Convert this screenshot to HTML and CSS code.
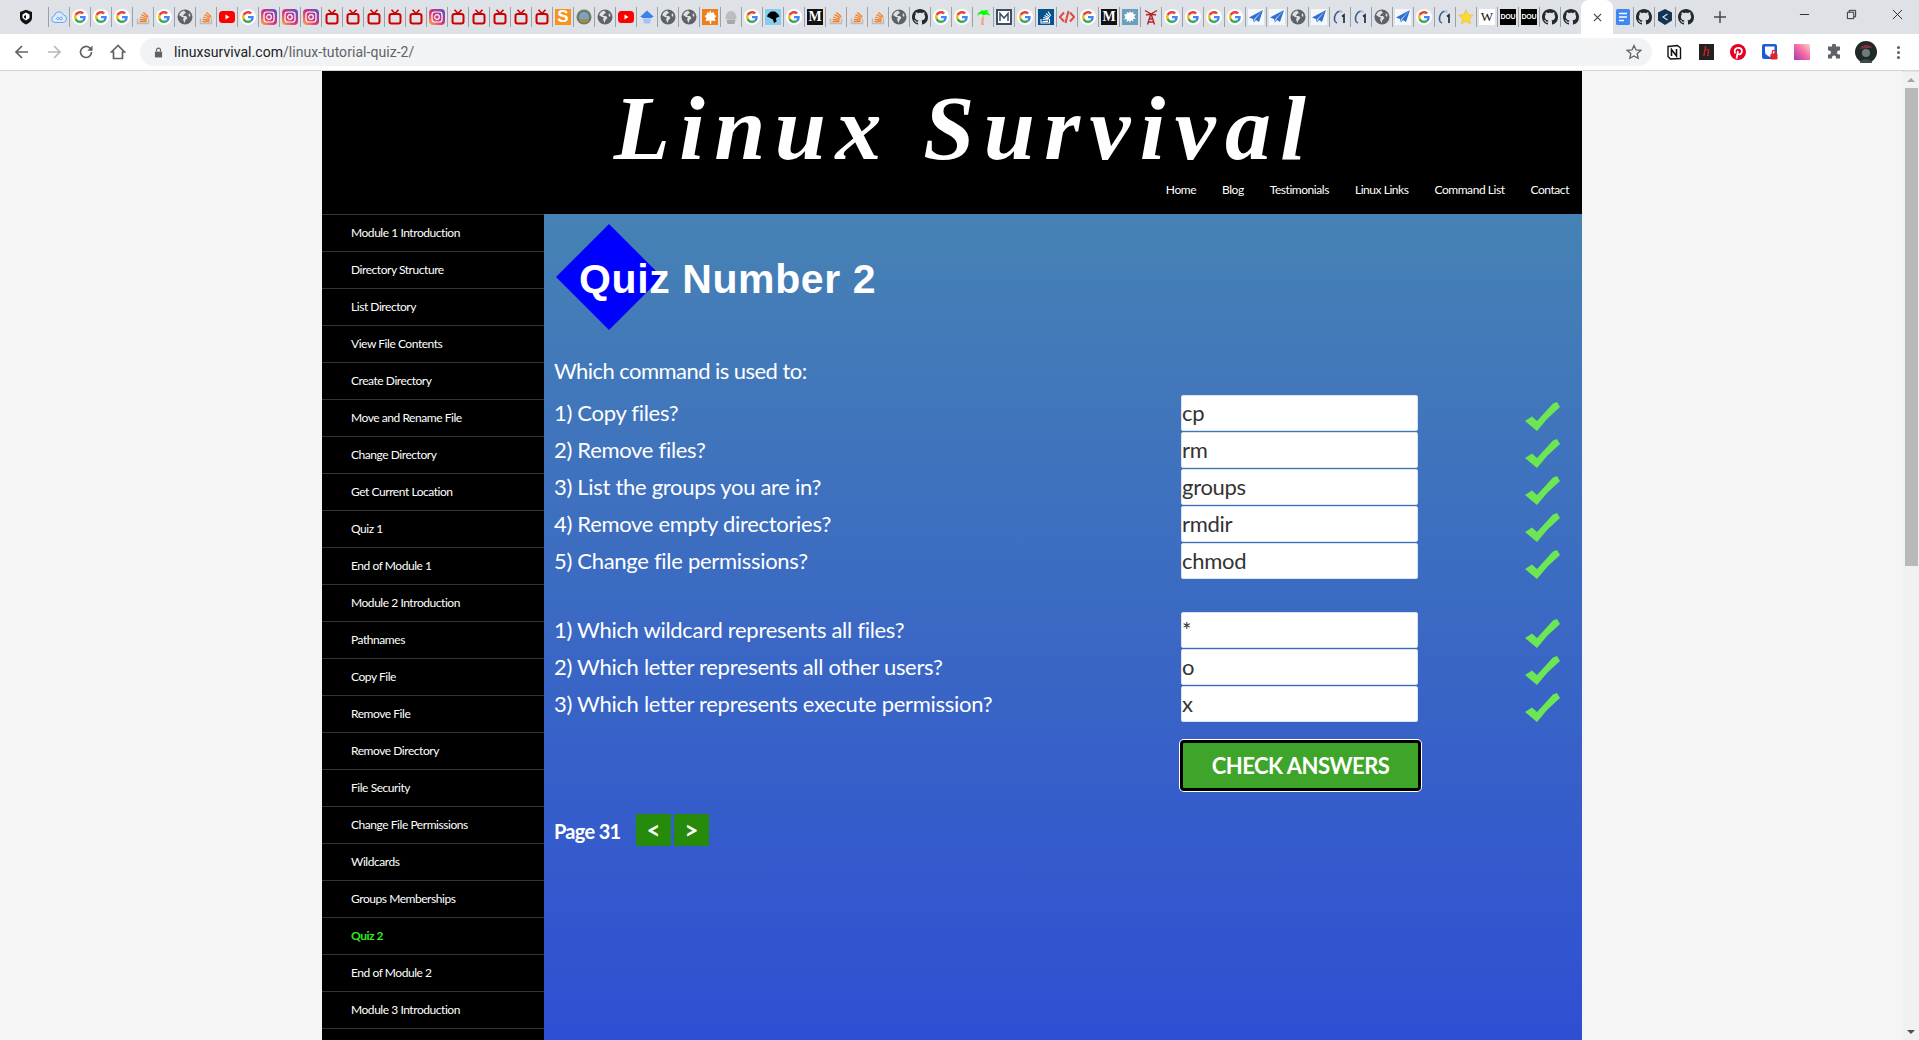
FILE: index.html
```html
<!DOCTYPE html>
<html lang="en">
<head>
<meta charset="utf-8">
<title>Linux Survival</title>
<link rel="stylesheet" href="styles.css">
</head>
<body>
<svg class="defs" width="0" height="0" aria-hidden="true">
<symbol id="g" viewBox="-8 -8 64 64"><circle cx="24" cy="24" r="32" fill="#fff"/><path fill="#EA4335" d="M24 9.5c3.54 0 6.71 1.22 9.21 3.6l6.85-6.85C35.9 2.38 30.47 0 24 0 14.62 0 6.51 5.38 2.56 13.22l7.98 6.19C12.43 13.72 17.74 9.5 24 9.5z"/><path fill="#4285F4" d="M46.98 24.55c0-1.57-.15-3.09-.38-4.55H24v9.02h12.94c-.58 2.96-2.26 5.48-4.78 7.18l7.73 6c4.51-4.18 7.09-10.36 7.09-17.65z"/><path fill="#FBBC05" d="M10.53 28.59c-.48-1.45-.76-2.99-.76-4.59s.27-3.14.76-4.59l-7.98-6.19C.92 16.46 0 20.12 0 24c0 3.88.92 7.54 2.56 10.78l7.97-6.19z"/><path fill="#34A853" d="M24 48c6.48 0 11.93-2.13 16.01-5.81l-7.73-6c-2.15 1.45-4.92 2.3-8.28 2.3-6.26 0-11.57-4.22-13.47-9.91l-7.98 6.19C6.51 42.62 14.62 48 24 48z"/></symbol>
<symbol id="gh" viewBox="0 0 16 16"><path fill="#24292e" d="M8 0C3.58 0 0 3.58 0 8c0 3.54 2.29 6.53 5.47 7.59.4.07.55-.17.55-.38 0-.19-.01-.82-.01-1.49-2.01.37-2.53-.49-2.69-.94-.09-.23-.48-.94-.82-1.13-.28-.15-.68-.52-.01-.53.63-.01 1.08.58 1.23.82.72 1.21 1.87.87 2.33.66.07-.52.28-.87.51-1.07-1.78-.2-3.64-.89-3.64-3.95 0-.87.31-1.59.82-2.15-.08-.2-.36-1.02.08-2.12 0 0 .67-.21 2.2.82.64-.18 1.32-.27 2-.27.68 0 1.36.09 2 .27 1.53-1.04 2.2-.82 2.2-.82.44 1.1.16 1.92.08 2.12.51.56.82 1.27.82 2.15 0 3.07-1.87 3.75-3.65 3.95.29.25.54.73.54 1.48 0 1.07-.01 1.93-.01 2.2 0 .21.15.46.55.38A8.013 8.013 0 0016 8c0-4.42-3.58-8-8-8z"/></symbol>
<symbol id="so" viewBox="0 0 16 16"><path fill="none" stroke="#bcbbbb" stroke-width="1.4" d="M2.5 9.5v5h11v-5"/><path fill="none" stroke="#f48024" stroke-width="1.3" d="M4.500 12.500h7M4.700 10.300l6.800.9M5.300 8l6.500 2M6.500 5.600l6 3.200M8.300 3.400l5 4.300"/></symbol>
<symbol id="globe" viewBox="0 0 16 16"><circle cx="8" cy="8" r="7.5" fill="#5f6368"/><path fill="#dee1e6" d="M7 1.500 4 3 2 6l3 2 2 .5-1 2 1.500 3.500 1-3 2-2-1.500-2H6l1-2 2-1zM12 4l1.500 2-.5 2-1.500-1.500z"/></symbol>
<symbol id="yt" viewBox="0 0 16 16"><rect y="2" width="16" height="12" rx="3.500" fill="#f00"/><path fill="#fff" d="m6.500 5.500 4 2.500-4 2.500z"/></symbol>
<symbol id="ig" viewBox="0 0 16 16"><defs><linearGradient id="igg" x1="0" y1="1" x2="1" y2="0"><stop offset="0" stop-color="#fdb04a"/><stop offset=".45" stop-color="#d6337a"/><stop offset="1" stop-color="#5a50c8"/></linearGradient></defs><rect width="16" height="16" rx="4" fill="url(#igg)"/><rect x="3" y="3" width="10" height="10" rx="2.500" fill="none" stroke="#fff" stroke-width="1.200"/><circle cx="8" cy="8" r="2.300" fill="none" stroke="#fff" stroke-width="1.200"/></symbol>
<symbol id="tv" viewBox="0 0 16 16"><path fill="none" stroke="#c00" stroke-width="1.600" d="m4.500.8 3.500 3.700L11.500.8"/><rect x="2.500" y="5" width="11" height="9.500" rx="2" fill="none" stroke="#c00" stroke-width="2"/></symbol>
<symbol id="cloud" viewBox="0 0 16 16"><path fill="#dbeafe" stroke="#6aa5e8" stroke-width="1" d="M4 13.500a3.500 3.500 0 0 1-.6-6.900A4.700 4.700 0 0 1 12.500 6a3.800 3.800 0 0 1-.3 7.500z"/><path fill="none" stroke="#6aa5e8" d="M5.500 9.800a1.400 1.400 0 0 1 2.500-.8l1 1.500a1.400 1.400 0 1 0 0-2l-1 1.500a1.400 1.400 0 0 1-2.500-.2z"/></symbol>
<symbol id="photo" viewBox="0 0 16 16"><circle cx="8" cy="8" r="7.500" fill="#6d7a66"/><circle cx="8" cy="8" r="5" fill="#7ba3c0"/><path fill="#a58a4a" d="M3 10h10l-2 3.500H5z"/></symbol>
<symbol id="house" viewBox="0 0 16 16"><path fill="#3b82e8" d="M8 1.500 15 8h-2v1H3V8H1z"/><path fill="#9cc4f5" d="M4 9.500h8l-1 5H5z"/></symbol>
<symbol id="leaf" viewBox="0 0 16 16"><rect width="16" height="16" fill="#ef7f1a"/><path fill="#fff" d="m8 1 1.500 3 2-1 1 3 2 1-2 2 1 3-4-.5-.5 3.500h-1l-.5-3.500-4 .5 1-3-2-2 2-1 1-3 2 1z"/></symbol>
<symbol id="cup" viewBox="0 0 16 16"><path fill="#bdbdbd" d="M3 7a5 5 0 0 1 10 0 2 2 0 0 1 0 3H3a2 2 0 0 1 0-3z"/><path fill="#a8a8a8" d="M3.500 10.500h9l-1 4.500h-7z"/></symbol>
<symbol id="dog" viewBox="0 0 16 16"><rect width="16" height="16" fill="#87cdee"/><path fill="#000" d="M3 5 6 2.500h4L13 5l1.500 2.500L11 9l.5 3.500L9 14l-1-3.500L5 9 2 7.500z"/></symbol>
<symbol id="palm" viewBox="0 0 16 16"><path fill="#f2a68a" d="M6 16c0-4 .5-7 2-9l1.500.5C8.500 10 8.500 13 9 16z"/><path fill="#0f0" d="M8.500 6.500C6 4 3.500 5 2 7.500 3 5 3 3 6 2.500 5.500 1.500 7 .5 9 2c1.500-1.500 3.500-1 5 .5-1.500-.3-2.500 0-3 .5 2 .2 3.500 1.500 4 4-1.500-1.500-3.500-2.500-6.500-.5z"/></symbol>
<symbol id="mbox" viewBox="0 0 16 16"><rect x="1" y="1" width="14" height="14" fill="#fff" stroke="#3d4f66" stroke-width="2"/><path fill="none" stroke="#3d4f66" stroke-width="1.500" d="M4 12V4.500L8 9l4-4.500V12"/></symbol>
<symbol id="soblue" viewBox="0 0 16 16"><rect width="16" height="16" fill="#06528f"/><path fill="none" stroke="#fff" stroke-width="1.100" d="M3 10v4h8.500v-4M4.500 12.500h5.500M4.700 10.500l5.500.5M5.300 8.500l5.300 1.400M6.500 6.500l4.800 2.400M8 4.500l4 3.300M10 2.500l2.800 4.300"/></symbol>
<symbol id="code" viewBox="0 0 16 16"><path fill="none" stroke="#e2483d" stroke-width="2" d="M5 3.500.8 8 5 12.500M11 3.500 15.200 8 11 12.500M9.500 2 6.500 14"/></symbol>
<symbol id="splash" viewBox="0 0 16 16"><rect width="16" height="16" fill="#6a9ebd"/><path fill="#fff" d="m8 2 1 2 2.500-1.500L11 5l3 .5-2 2 2 2.500-3-.5.500 3-2.500-1.500L8 14l-1-2.500L4.500 13 5 10l-3 .500L3.500 8 2 5.500 5 5 4.500 3 7 4z"/></symbol>
<symbol id="tower" viewBox="0 0 16 16"><path fill="none" stroke="#b3262a" stroke-width="1.400" d="M8 4.500 4.500 15.500M8 4.500l3.500 11M6.500 10h3M5.500 13h5M2 1.500 8 5l6-3.500M3 6l5-1 5 1"/></symbol>
<symbol id="plane" viewBox="0 0 16 16"><rect width="16" height="16" fill="#f4f7fc"/><path fill="#2f6fd0" d="M15 1 1 8.500l4 1.500 1 3.500 2-2.500 3 2z"/><path fill="#bcd4f2" d="m15 1-9 9 .5 3 1-3z"/></symbol>
<symbol id="c1" viewBox="0 0 16 16"><path fill="none" stroke="#3b5f96" stroke-width="1.600" d="M8 2C4 3 2 7 2.500 11c.2 1.500 1 2.500 2.500 3"/><path fill="#b7c4d8" d="M7 1h3l1 3H8z"/><path fill="none" stroke="#1d2d4d" stroke-width="1.700" d="M10 7.500 12 6v8"/></symbol>
<symbol id="star" viewBox="0 0 16 16"><path fill="#fdd835" stroke="#e5b92a" stroke-width=".5" d="m8 .800 2.200 4.800 5.200.600-3.800 3.500 1 5.200L8 12.300l-4.600 2.600 1-5.200L.600 6.200l5.200-.600z"/></symbol>
<symbol id="doc" viewBox="0 0 16 16"><rect x="1" width="14" height="16" rx="1.500" fill="#4285f4"/><path fill="none" stroke="#fff" stroke-width="1.500" d="M4 4.500h8M4 8h8M4 11.500h5"/></symbol>
<symbol id="hex" viewBox="0 0 16 16"><path fill="#14334f" d="M8 0 15 3.500v8L8 16 1 11.500v-8z"/><path fill="none" stroke="#cfe3f3" stroke-width="1.200" d="M10.500 5 6 8l4.500 3"/></symbol>
<symbol id="tick" viewBox="0 0 35 29"><path fill="#6ce653" d="M0 19l7-4.500 5 4.500L28 1.500 32 0l3 5-12.500 11.500L12 29z"/></symbol>
</svg>

<header class="chrome">
  <div class="tabstrip">
    <div class="shield"><svg class="fav" viewBox="0 0 16 16"><path fill="#111" d="M8 .8 14 3v6c0 3-3 5.200-6 6.400C5 14.200 2 12 2 9V3z"/><path fill="#fff" d="m8 3.500 3.500 2v3.500L8 11.500 4.500 9V5.500z"/><path fill="#111" d="M8 6 6 7v1.500L8 10z"/></svg></div>
    <div class="tab"><svg class="fav"><use href="#cloud"/></svg></div>
    <div class="tab"><svg class="fav"><use href="#g"/></svg></div>
    <div class="tab"><svg class="fav"><use href="#g"/></svg></div>
    <div class="tab"><svg class="fav"><use href="#g"/></svg></div>
    <div class="tab"><svg class="fav"><use href="#so"/></svg></div>
    <div class="tab"><svg class="fav"><use href="#g"/></svg></div>
    <div class="tab"><svg class="fav"><use href="#globe"/></svg></div>
    <div class="tab"><svg class="fav"><use href="#so"/></svg></div>
    <div class="tab"><svg class="fav"><use href="#yt"/></svg></div>
    <div class="tab"><svg class="fav"><use href="#g"/></svg></div>
    <div class="tab"><svg class="fav"><use href="#ig"/></svg></div>
    <div class="tab"><svg class="fav"><use href="#ig"/></svg></div>
    <div class="tab"><svg class="fav"><use href="#ig"/></svg></div>
    <div class="tab"><svg class="fav"><use href="#tv"/></svg></div>
    <div class="tab"><svg class="fav"><use href="#tv"/></svg></div>
    <div class="tab"><svg class="fav"><use href="#tv"/></svg></div>
    <div class="tab"><svg class="fav"><use href="#tv"/></svg></div>
    <div class="tab"><svg class="fav"><use href="#tv"/></svg></div>
    <div class="tab"><svg class="fav"><use href="#ig"/></svg></div>
    <div class="tab"><svg class="fav"><use href="#tv"/></svg></div>
    <div class="tab"><svg class="fav"><use href="#tv"/></svg></div>
    <div class="tab"><svg class="fav"><use href="#tv"/></svg></div>
    <div class="tab"><svg class="fav"><use href="#tv"/></svg></div>
    <div class="tab"><svg class="fav"><use href="#tv"/></svg></div>
    <div class="tab"><span class="favbox favbox-s">S</span></div>
    <div class="tab"><svg class="fav"><use href="#photo"/></svg></div>
    <div class="tab"><svg class="fav"><use href="#globe"/></svg></div>
    <div class="tab"><svg class="fav"><use href="#yt"/></svg></div>
    <div class="tab"><svg class="fav"><use href="#house"/></svg></div>
    <div class="tab"><svg class="fav"><use href="#globe"/></svg></div>
    <div class="tab"><svg class="fav"><use href="#globe"/></svg></div>
    <div class="tab"><svg class="fav"><use href="#leaf"/></svg></div>
    <div class="tab"><svg class="fav"><use href="#cup"/></svg></div>
    <div class="tab"><svg class="fav"><use href="#g"/></svg></div>
    <div class="tab"><svg class="fav"><use href="#dog"/></svg></div>
    <div class="tab"><svg class="fav"><use href="#g"/></svg></div>
    <div class="tab"><span class="favbox favbox-m">M</span></div>
    <div class="tab"><svg class="fav"><use href="#so"/></svg></div>
    <div class="tab"><svg class="fav"><use href="#so"/></svg></div>
    <div class="tab"><svg class="fav"><use href="#so"/></svg></div>
    <div class="tab"><svg class="fav"><use href="#globe"/></svg></div>
    <div class="tab"><svg class="fav"><use href="#gh"/></svg></div>
    <div class="tab"><svg class="fav"><use href="#g"/></svg></div>
    <div class="tab"><svg class="fav"><use href="#g"/></svg></div>
    <div class="tab"><svg class="fav"><use href="#palm"/></svg></div>
    <div class="tab"><svg class="fav"><use href="#mbox"/></svg></div>
    <div class="tab"><svg class="fav"><use href="#g"/></svg></div>
    <div class="tab"><svg class="fav"><use href="#soblue"/></svg></div>
    <div class="tab"><svg class="fav"><use href="#code"/></svg></div>
    <div class="tab"><svg class="fav"><use href="#g"/></svg></div>
    <div class="tab"><span class="favbox favbox-m">M</span></div>
    <div class="tab"><svg class="fav"><use href="#splash"/></svg></div>
    <div class="tab"><svg class="fav"><use href="#tower"/></svg></div>
    <div class="tab"><svg class="fav"><use href="#g"/></svg></div>
    <div class="tab"><svg class="fav"><use href="#g"/></svg></div>
    <div class="tab"><svg class="fav"><use href="#g"/></svg></div>
    <div class="tab"><svg class="fav"><use href="#g"/></svg></div>
    <div class="tab"><svg class="fav"><use href="#plane"/></svg></div>
    <div class="tab"><svg class="fav"><use href="#plane"/></svg></div>
    <div class="tab"><svg class="fav"><use href="#globe"/></svg></div>
    <div class="tab"><svg class="fav"><use href="#plane"/></svg></div>
    <div class="tab"><svg class="fav"><use href="#c1"/></svg></div>
    <div class="tab"><svg class="fav"><use href="#c1"/></svg></div>
    <div class="tab"><svg class="fav"><use href="#globe"/></svg></div>
    <div class="tab"><svg class="fav"><use href="#plane"/></svg></div>
    <div class="tab"><svg class="fav"><use href="#g"/></svg></div>
    <div class="tab"><svg class="fav"><use href="#c1"/></svg></div>
    <div class="tab"><svg class="fav"><use href="#star"/></svg></div>
    <div class="tab"><span class="favbox favbox-w">W</span></div>
    <div class="tab"><span class="favbox favbox-d">DOU</span></div>
    <div class="tab"><span class="favbox favbox-d">DOU</span></div>
    <div class="tab"><svg class="fav"><use href="#gh"/></svg></div>
    <div class="tab"><svg class="fav"><use href="#gh"/></svg></div>
    <div class="tab-active"><svg class="tab-x" viewBox="0 0 10 10"><path d="m1 1 8 8M9 1 1 9"/></svg></div>
    <div class="tab tab-plain"><svg class="fav"><use href="#doc"/></svg></div>
    <div class="tab"><svg class="fav"><use href="#gh"/></svg></div>
    <div class="tab"><svg class="fav"><use href="#hex"/></svg></div>
    <div class="tab"><svg class="fav"><use href="#gh"/></svg></div>
    <div class="newtab"><svg viewBox="0 0 12 12"><path d="M6 0v12M0 6h12"/></svg></div>
    <div class="winctl">
      <svg viewBox="0 0 12 12"><path d="M1 6h10"/></svg>
      <svg viewBox="0 0 12 12"><path d="M1.500 3.500h7v7h-7zM3.500 3.500v-2h7v7h-2"/></svg>
      <svg viewBox="0 0 12 12"><path d="m1 1 10 10M11 1 1 11"/></svg>
    </div>
  </div>
  <div class="toolbar">
    <div class="tbtn"><svg viewBox="0 0 16 16"><path d="M14 8H2.500M8 2 2 8l6 6"/></svg></div>
    <div class="tbtn tbtn-off"><svg viewBox="0 0 16 16"><path d="M2 8h11.500M8 2l6 6-6 6"/></svg></div>
    <div class="tbtn"><svg viewBox="0 0 16 16"><path d="M13.500 8a5.500 5.500 0 1 1-1.700-4L14 6"/><path class="solid" d="M14.500 1.500v5.200H9.300z"/></svg></div>
    <div class="tbtn"><svg viewBox="0 0 16 16"><path d="M8 1.500 1.500 8h2v6.500h9V8h2z"/></svg></div>
    <div class="omnibox">
      <svg class="lock" viewBox="0 0 10 12"><path class="solid" d="M1 5h8v6.500H1z"/><path d="M2.800 5V3.300a2.200 2.200 0 0 1 4.400 0V5"/></svg>
      <span class="url"><span class="host">linuxsurvival.com</span>/linux-tutorial-quiz-2/</span>
      <svg class="bookmark" viewBox="0 0 16 16"><path d="m8 1.500 2 4.400 4.800.5-3.600 3.200 1 4.700L8 11.900l-4.200 2.400 1-4.700L1.200 6.400 6 5.900z"/></svg>
    </div>
    <div class="exts">
      <div class="ext"><svg class="fav" viewBox="0 0 16 16"><path fill="#fff" stroke="#111" stroke-width="1.400" d="M2 2.500 11.500 1.500 14.500 4v10.500l-10 .500L2 12.500z"/><path fill="none" stroke="#111" stroke-width="1.600" d="M5.500 12V5.500l5 6.500V5"/></svg></div>
      <div class="ext"><span class="ext-h">h</span></div>
      <div class="ext"><svg class="fav" viewBox="0 0 16 16"><circle cx="8" cy="8" r="8" fill="#e60023"/><path fill="none" stroke="#fff" stroke-width="1.800" d="M6.500 14.500 8 7M5.300 9.500C3.500 6.500 5.500 3.800 8.300 3.800c2.500 0 3.800 1.700 3.600 3.700-.2 2.200-2 3.500-3.900 2.500"/></svg></div>
      <div class="ext"><svg class="fav" viewBox="0 0 16 16"><rect width="15" height="15" rx="2" fill="#175ddc"/><path fill="#fff" d="M3 2.500h9.500V8c0 2-2 3.500-4.700 5C5 11.500 3 10 3 8z"/><rect x="8.500" y="9.500" width="7" height="6" rx="1" fill="#e0222d"/><path fill="none" stroke="#e0222d" stroke-width="1.200" d="M10.300 9.500V8a1.700 1.700 0 0 1 3.400 0v1.500"/></svg></div>
      <div class="ext"><span class="ext-pink"></span></div>
      <div class="ext"><svg class="fav" viewBox="0 0 16 16"><path fill="#5f6368" d="M6 2a2 2 0 0 1 4 0v1h4v4h-1a2 2 0 0 0 0 4h1v4h-4v-1a2 2 0 0 0-4 0v1H2v-4h1a2 2 0 0 0 0-4H2V3h4z" transform="translate(0 -.5)"/></svg></div>
      <div class="ext"><svg class="avatar" viewBox="0 0 22 22"><circle cx="11" cy="11" r="11" fill="#1f2a2a"/><path fill="#8a2f35" d="M5 8c1-4 9-6 12-1-3 0-8 0-12 1z"/><circle cx="11" cy="12" r="4" fill="#6f7d7a"/><path fill="#3c4a48" d="M5 22c0-5 12-5 12 0z"/></svg></div>
      <div class="ext"><span class="kebab"></span></div>
    </div>
  </div>
</header>

<div class="viewport">
  <div class="page">
    <div class="site">
      <div class="masthead">
        <div class="logo">Linux Survival</div>
        <nav class="topnav">
          <a>Home</a><a>Blog</a><a>Testimonials</a><a>Linux Links</a><a>Command List</a><a>Contact</a>
        </nav>
      </div>
      <div class="columns">
        <aside class="sidebar">
          <a>Module 1 Introduction</a>
          <a>Directory Structure</a>
          <a>List Directory</a>
          <a>View File Contents</a>
          <a>Create Directory</a>
          <a>Move and Rename File</a>
          <a>Change Directory</a>
          <a>Get Current Location</a>
          <a>Quiz 1</a>
          <a>End of Module 1</a>
          <a>Module 2 Introduction</a>
          <a>Pathnames</a>
          <a>Copy File</a>
          <a>Remove File</a>
          <a>Remove Directory</a>
          <a>File Security</a>
          <a>Change File Permissions</a>
          <a>Wildcards</a>
          <a>Groups Memberships</a>
          <a class="current">Quiz 2</a>
          <a>End of Module 2</a>
          <a>Module 3 Introduction</a>
        </aside>
        <main class="content">
          <div class="heading">
            <span class="diamond"></span>
            <h1>Quiz Number 2</h1>
          </div>
          <p class="lead">Which command is used to:</p>
          <div class="quiz">
            <label>1) Copy files?</label><input value="cp" readonly><svg class="check"><use href="#tick"/></svg>
            <label>2) Remove files?</label><input value="rm" readonly><svg class="check"><use href="#tick"/></svg>
            <label>3) List the groups you are in?</label><input value="groups" readonly><svg class="check"><use href="#tick"/></svg>
            <label>4) Remove empty directories?</label><input value="rmdir" readonly><svg class="check"><use href="#tick"/></svg>
            <label>5) Change file permissions?</label><input value="chmod" readonly><svg class="check"><use href="#tick"/></svg>
          </div>
          <div class="quiz quiz-second">
            <label>1) Which wildcard represents all files?</label><input value="*" readonly><svg class="check"><use href="#tick"/></svg>
            <label>2) Which letter represents all other users?</label><input value="o" readonly><svg class="check"><use href="#tick"/></svg>
            <label>3) Which letter represents execute permission?</label><input value="x" readonly><svg class="check"><use href="#tick"/></svg>
          </div>
          <button class="submit" type="button">CHECK ANSWERS</button>
          <div class="pager">
            <span class="pagenum">Page 31</span>
            <a class="pagebtn">&lt;</a>
            <a class="pagebtn">&gt;</a>
          </div>
        </main>
      </div>
    </div>
  </div>
  <div class="scrollbar">
    <span class="arrow-up"></span>
    <div class="track"><div class="thumb"></div></div>
    <span class="arrow-down"></span>
  </div>
</div>
</body>
</html>
```
FILE: styles.css
```css
* { box-sizing: border-box; }
html, body { margin: 0; height: 100%; overflow: hidden; }
body { display: flex; flex-direction: column; background: #f5f5f5; font-family: Lato, "Liberation Sans", sans-serif; }
.defs { position: absolute; }

/* browser chrome */
.chrome { flex: none; height: 71px; display: flex; flex-direction: column; }
.tabstrip { height: 34px; background: #dee1e6; display: flex; align-items: center; }
.shield { width: 48px; padding-left: 18px; display: flex; }
.fav { width: 16px; height: 16px; display: block; }
.favbox { width: 16px; height: 16px; display: block; text-align: center; overflow: hidden; font-weight: 700; }
.favbox-s { background: #f7931e; color: #fff; font: bold 17px/16px "Liberation Sans", sans-serif; }
.favbox-m { background: #111; color: #fff; font: bold 14px/16px "Liberation Serif", serif; }
.favbox-w { background: #fff; color: #111; font: 13px/16px "Liberation Serif", serif; }
.favbox-d { background: #000; color: #fff; font: bold 7px/16px "Liberation Sans", sans-serif; letter-spacing: -.2px; }
.tab { width: 21px; height: 20px; border-left: 1px solid #9ca1a8; display: flex; align-items: center; justify-content: center; }
.tab-plain { width: 20px; border-left: none; }
.tab-active { width: 32px; height: 34px; background: #fff; border-radius: 8px 8px 0 0; display: flex; align-items: center; justify-content: center; }
.tab-x { width: 9px; height: 9px; fill: none; stroke: #45494e; stroke-width: 1.4; }
.newtab { margin-left: 18px; width: 12px; height: 12px; display: flex; }
.newtab svg { fill: none; stroke: #45494e; stroke-width: 1.5; }
.winctl { position: relative; top: -3px; margin-left: auto; width: 120px; display: flex; justify-content: space-between; padding-right: 16px; }
.winctl svg { width: 11px; height: 11px; fill: none; stroke: #222; stroke-width: 1; }
.toolbar { height: 37px; background: #fff; border-bottom: 1px solid #d5d5d5; display: flex; align-items: center; padding-left: 6px; padding-right: 5px; }
.tbtn { width: 32px; display: flex; justify-content: center; }
.tbtn svg { width: 16px; height: 16px; fill: none; stroke: #5f6368; stroke-width: 1.700; }
.tbtn-off svg { stroke: #b6b9bd; }
.solid { fill: #5f6368; stroke: none; }
.omnibox { flex: 1; margin-left: 6px; height: 28px; background: #f1f3f4; border-radius: 14px; display: flex; align-items: center; padding: 0 10px 0 14px; }
.lock { width: 9px; height: 11px; fill: none; stroke: #5f6368; stroke-width: 1.2; margin-right: 11px; }
.url { font: 14px Roboto, sans-serif; letter-spacing: .05px; color: #5f6368; }
.host { color: #202124; }
.bookmark { margin-left: auto; width: 16px; height: 16px; fill: none; stroke: #5f6368; stroke-width: 1.300; }
.exts { display: flex; margin-left: 6px; }
.ext { width: 32px; display: flex; justify-content: center; align-items: center; height: 24px; }
.ext-h { width: 15px; height: 16px; background: #222; color: #e02020; font: italic 14px/15px "Liberation Serif", serif; text-align: center; }
.ext-pink { width: 16px; height: 16px; background: linear-gradient(45deg, #a83ab8, #f76fa5 55%, #fbd6c0); }
.avatar { width: 22px; height: 22px; }
.kebab { width: 3px; height: 3px; border-radius: 50%; background: #5f6368; box-shadow: 0 -5px 0 #5f6368, 0 5px 0 #5f6368; }

/* page */
.viewport { flex: 1; min-height: 0; display: flex; }
.page { flex: 1; overflow: hidden; }
.site { width: 1260px; margin-left: 322px; }
.masthead { background: #000; height: 143px; display: flex; flex-direction: column; }
.logo { font: italic bold 92px/104px "Liberation Serif", serif; color: #fff; text-align: center; letter-spacing: 9.400px; padding: 5px 0 0 25px; height: 104px; white-space: nowrap; }
.topnav { display: flex; justify-content: flex-end; margin-top: 6px; }
.topnav a { font-size: 12px; line-height: 18px; letter-spacing: -.45px; color: #fff; padding: 0 13px; }
.columns { display: flex; }
.sidebar { width: 222px; flex: none; background: #000; display: flex; flex-direction: column; height: 826px; border-top: 1px solid #333; }
.sidebar a { height: 37px; flex: none; line-height: 36px; padding-left: 29px; font-size: 12px; letter-spacing: -.45px; color: #fff; border-bottom: 1px solid #333; }
.sidebar a.current { color: #33e822; font-weight: 700; }
.content { flex: 1; height: 826px; padding-left: 10px; background: linear-gradient(#4682b4, #2f4fd3); }
.heading { position: relative; height: 140px; padding-top: 43px; }
.heading h1 { position: relative; margin: 0 0 0 25px; font: bold 41px/44px "Liberation Sans", sans-serif; letter-spacing: .6px; color: #fff; }
.diamond { position: absolute; left: 2px; top: 10px; width: 106px; height: 106px; background: #00f; clip-path: polygon(50% 0, 100% 50%, 50% 100%, 0 50%); }
.lead { margin: 0 0 4px; height: 37px; font-size: 22px; line-height: 34px; letter-spacing: -.55px; color: #fff; }
.quiz { display: grid; grid-template-columns: 627px 237px 1fr; grid-auto-rows: 37px; }
.quiz-second { margin-top: 32px; }
.quiz label { font-size: 22px; line-height: 36px; letter-spacing: -.3px; color: #fff; }
.quiz input { width: 237px; height: 36px; padding: 0 0 2px; border: 1px solid #dbe3ee; border-radius: 2px; background: #fff; font: 22px Lato, sans-serif; letter-spacing: -.3px; color: #333; outline: none; }
.check { width: 35px; height: 29px; justify-self: end; margin: 7px 22px 0 0; }
.submit { display: block; margin: 17px 0 0 626px; width: 241px; height: 51px; padding: 0; background: #3fa52a; border: 3px solid #000; border-radius: 4px; box-shadow: 0 0 0 1px #fff; font: bold 22px Lato, sans-serif; letter-spacing: -.5px; color: #fff; }
.pager { margin-top: 23px; display: flex; align-items: center; gap: 3px; height: 32px; }
.pagenum { font-size: 20px; font-weight: 700; letter-spacing: -.7px; color: #fff; width: 79px; padding-top: 2px; }
.pagebtn { width: 35px; height: 32px; background: #268a0a; color: #fff; font-size: 24px; font-weight: 700; line-height: 31px; text-align: center; }

/* scrollbar */
.scrollbar { width: 17px; background: #f1f1f1; display: flex; flex-direction: column; align-items: center; border-top: 1px solid #e4e4e4; }
.arrow-up, .arrow-down { width: 0; height: 0; flex: none; border-left: 4px solid transparent; border-right: 4px solid transparent; }
.arrow-up { border-bottom: 4px solid #a3a3a3; margin: 6px 0; }
.arrow-down { border-top: 4px solid #505050; margin: 6px 0; }
.track { flex: 1; width: 100%; padding: 0 1px 0 3px; }
.thumb { height: 478px; background: #b9b9b9; }
```
